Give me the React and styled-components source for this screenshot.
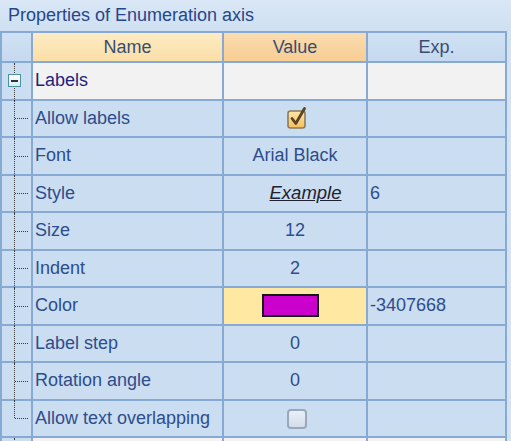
import React from 'react';
import styled, { createGlobalStyle, css } from 'styled-components';

const GlobalStyle = createGlobalStyle`
  html, body {
    margin: 0;
    padding: 0;
    background: #d3e3f4;
  }
  body {
    font-family: "Liberation Sans", Arial, sans-serif;
    overflow: hidden;
  }
`;

const Panel = styled.div`
  width: 511px;
  height: 441px;
  background: #d3e3f4;
  overflow: hidden;
`;

const Title = styled.div`
  height: 31px;
  display: flex;
  align-items: center;
  padding-left: 8px;
  font-size: 18px;
  color: #27468a;
  background: linear-gradient(#d9e7f6, #cfe0f2);
`;

const Grid = styled.div`
  width: 503px;
  display: grid;
  grid-template-columns: 29px 189px 142px 137px;
  grid-template-rows: 28px;
  grid-auto-rows: 35.5px;
  gap: 2px;
  padding: 2px;
  background: #87aad4;
`;

const Cell = styled.div`
  display: flex;
  align-items: center;
  min-width: 0;
  font-size: 18px;
  color: #2d4d8c;
  background: ${({ $bg }) => $bg || '#cbddf1'};
  justify-content: ${({ $align }) => $align || 'flex-start'};
  padding-left: ${({ $pad }) => $pad ?? 2}px;
  white-space: nowrap;
  overflow: hidden;
`;

const HeadCell = styled(Cell)`
  justify-content: center;
  padding-left: 0;
  color: #3a4d6f;
  background: ${({ $tone }) =>
    $tone === 'name'
      ? 'linear-gradient(#fdebc4, #fadfa6)'
      : $tone === 'value'
      ? 'linear-gradient(#fbdcb0, #f7cd92)'
      : 'linear-gradient(#d0e1f3, #c5d9ef)'};
`;

const CategoryText = styled.span`
  color: #241f7c;
`;

const Gutter = styled.div`
  position: relative;
  background: #cbddf1;

  &::before {
    content: '';
    position: absolute;
    left: 12px;
    top: 0;
    height: ${({ $last }) => ($last ? '50%' : 'calc(100% + 2px)')};
    border-left: 1px dotted #3a3a3a;
  }

  ${({ $branch }) =>
    $branch &&
    css`
      &::after {
        content: '';
        position: absolute;
        left: 13px;
        top: 50%;
        width: 13px;
        border-top: 1px dotted #3a3a3a;
      }
    `}
`;

const ExpanderBox = styled.div`
  position: absolute;
  left: 6px;
  top: 50%;
  width: 11px;
  height: 11px;
  margin-top: -7px;
  border: 1px solid #4d93a6;
  background: linear-gradient(#ffffff, #dbeaf0);
  z-index: 1;

  &::after {
    content: '';
    position: absolute;
    left: 2px;
    right: 2px;
    top: 5px;
    height: 2px;
    background: #2a3440;
  }
`;

const Example = styled.span`
  font-style: italic;
  text-decoration: underline;
  color: #1f2230;
  font-size: 18.5px;
  margin-left: 21px;
`;

const Swatch = styled.div`
  width: 53px;
  height: 19px;
  margin-right: 10px;
  background: ${({ $color }) => $color};
  border: 2px solid #151515;
`;

const Unchecked = styled.div`
  width: 16px;
  height: 16px;
  border: 2px solid #9aa8bd;
  border-radius: 4px;
  background: linear-gradient(#e9eff7, #d3deeb);
  margin-left: 4px;
  margin-top: 2px;
`;

const CheckedBox = () => (
  <svg width="24" height="24" viewBox="0 0 24 24" style={{ marginLeft: 6 }}>
    <defs>
      <linearGradient id="chk" x1="0" y1="0" x2="0" y2="1">
        <stop offset="0" stopColor="#fde6a8" />
        <stop offset="1" stopColor="#f6bf5e" />
      </linearGradient>
    </defs>
    <rect x="2" y="5" width="17" height="17" rx="2.5" fill="url(#chk)" stroke="#8e7a5c" strokeWidth="1.6" />
    <path d="M6 12.5 L9.8 17.5 L18.5 2.5" fill="none" stroke="#5b4326" strokeWidth="2.8" strokeLinecap="round" strokeLinejoin="round" />
  </svg>
);

const rows = [
  { name: 'Allow labels', value: <CheckedBox /> },
  { name: 'Font', value: 'Arial Black' },
  { name: 'Style', value: <Example>Example</Example>, exp: '6' },
  { name: 'Size', value: '12' },
  { name: 'Indent', value: '2' },
  { name: 'Color', value: <Swatch $color="#cc00cc" />, exp: '-3407668', selected: true },
  { name: 'Label step', value: '0' },
  { name: 'Rotation angle', value: '0' },
  { name: 'Allow text overlapping', value: <Unchecked />, last: true },
];

export default function App() {
  return (
    <Panel>
      <GlobalStyle />
      <Title>Properties of Enumeration axis</Title>
      <Grid>
        <HeadCell $tone="exp" />
        <HeadCell $tone="name">Name</HeadCell>
        <HeadCell $tone="value">Value</HeadCell>
        <HeadCell $tone="exp">Exp.</HeadCell>

        <Gutter>
          <ExpanderBox />
        </Gutter>
        <Cell $bg="#f2f2f2">
          <CategoryText>Labels</CategoryText>
        </Cell>
        <Cell $bg="#f2f2f2" />
        <Cell $bg="#f2f2f2" />

        {rows.map((r) => (
          <React.Fragment key={r.name}>
            <Gutter $branch $last={r.last} />
            <Cell>{r.name}</Cell>
            <Cell $align="center" $pad={0} $bg={r.selected ? '#fee8a2' : undefined}>
              {r.value}
            </Cell>
            <Cell>{r.exp}</Cell>
          </React.Fragment>
        ))}

        <Gutter />
        <Cell $bg="#f2f2f2" />
        <Cell $bg="#f2f2f2" />
        <Cell $bg="#f2f2f2" />
      </Grid>
    </Panel>
  );
}
